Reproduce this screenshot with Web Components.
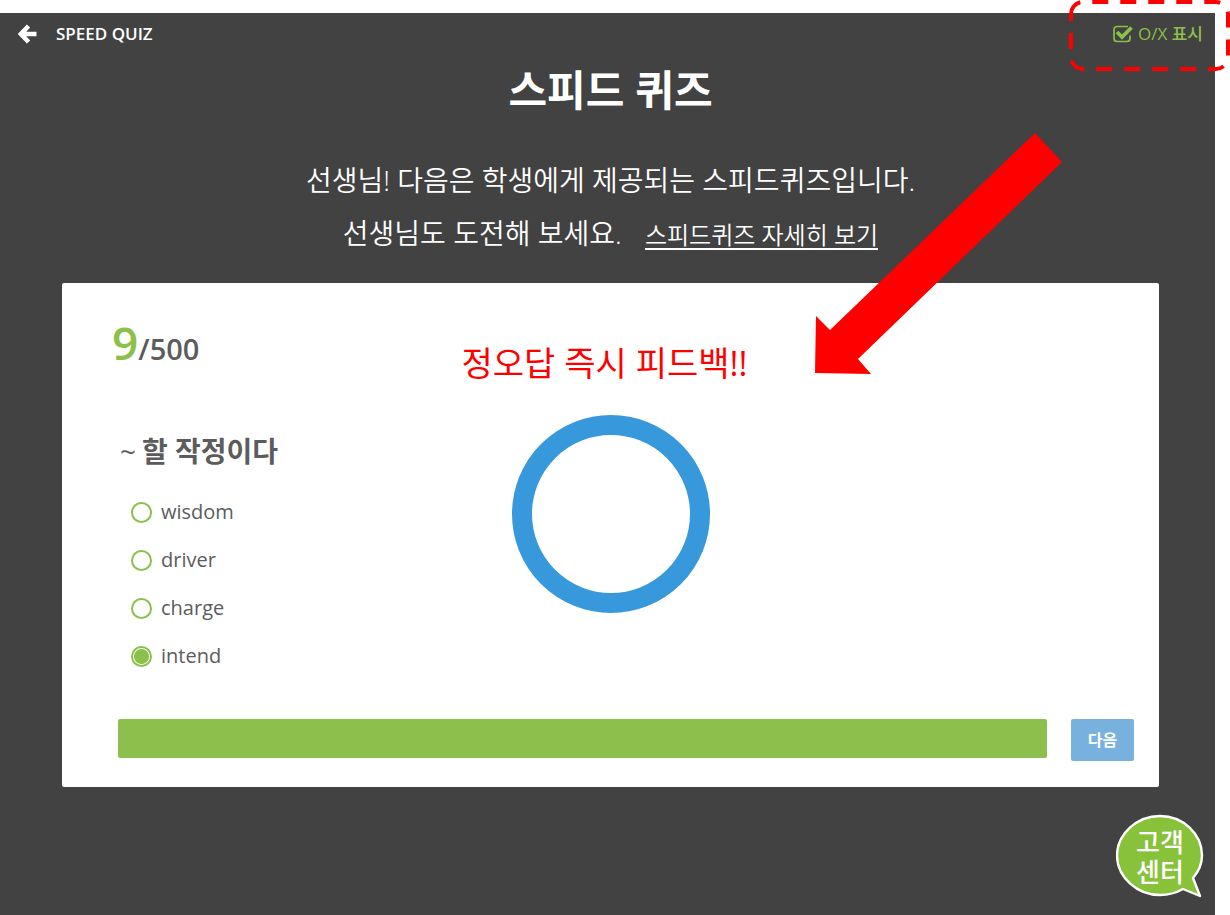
<!DOCTYPE html>
<html lang="ko">
<head>
<meta charset="utf-8">
<meta name="viewport" content="width=device-width, initial-scale=1">
<title>스피드 퀴즈</title>
<style>
  body { margin: 0; background: #fff; font-family: "Open Sans", "Noto Sans CJK KR", sans-serif; }
</style>
</head>
<body>
<quiz-page>
  <quiz-header slot="header" label="SPEED QUIZ"></quiz-header>
  <quiz-intro slot="intro"></quiz-intro>
  <quiz-card>
    <quiz-count slot="side" current="9" total="500"></quiz-count>
    <quiz-options slot="side" question="할 작정이다" choices="wisdom,driver,charge,intend" selected="intend"></quiz-options>
    <quiz-feedback slot="result">정오답 즉시 피드백!!</quiz-feedback>
    <quiz-footer slot="footer"></quiz-footer>
  </quiz-card>
  <help-bubble slot="overlay"></help-bubble>
  <callout-arrow slot="overlay"></callout-arrow>
  <callout-frame slot="overlay"></callout-frame>
</quiz-page>
<script>
const define = (name, render) => customElements.define(name, class extends HTMLElement {
  connectedCallback() {
    if (!this.shadowRoot) this.attachShadow({ mode: 'open' }).innerHTML =
      '<style>*{box-sizing:border-box}</style>' + render(this);
  }
});

define('quiz-page', () => `
<style>
  :host { position: relative; min-height: 100vh; padding: 13px 15px 0 0; box-sizing: border-box; display: flex; overflow: hidden; }
  main { flex: 1; background: #424242; color: #fff; padding-bottom: 120px; }
  .content { padding: 0 56px 0 62px; }
</style>
<main>
  <slot name="header"></slot>
  <div class="content"><slot name="intro"></slot><slot></slot></div>
</main>
<slot name="overlay"></slot>`);

define('quiz-header', el => `
<style>
  :host { display: block; font-size: 17px; font-weight: 600; line-height: 24px; }
  header { display: flex; justify-content: space-between; align-items: center; height: 42px; padding: 0 12px 0 18px; }
  a { display: flex; align-items: center; gap: 19px; color: #fff; text-decoration: none; }
  label { display: flex; align-items: center; gap: 5px; color: #8cbf4b; font-weight: 500; }
  .box { display: grid; }
  .box > * { grid-area: 1 / 1; }
  input { appearance: none; margin: 0; width: 20px; height: 18px; }
  svg { display: block; pointer-events: none; }
</style>
<header>
  <a href="#"><svg width="19" height="20" viewBox="0 0 19 20" fill="none" stroke="#fff" stroke-width="4.600"><path d="M10.500 2 3 10l7.500 8M3.500 10h15"/></svg>${el.getAttribute('label')}</a>
  <label><span class="box"><input type="checkbox" checked><svg width="20" height="18" viewBox="0 0 20 18" fill="none" stroke="#8cbf4b"><path stroke-width="1.700" d="M15 1.500H4A3 3 0 0 0 1 4.500v9a3 3 0 0 0 3 3h10a3 3 0 0 0 3-3v-3"/><path stroke-width="3.800" d="m4 7 5 5 9.500-9.500"/></svg></span>O/X 표시</label>
</header>`);

define('quiz-intro', () => `
<style>
  :host { display: block; text-align: center; }
  h1 { margin: 0 0 29px; font-size: 42px; line-height: 70px; font-weight: 700; }
  p { margin: 0 0 23px; font-size: 28px; line-height: 53px; font-weight: 350; }
  span { display: block; }
  a { color: #fff; font-size: 24px; margin-left: 16px; text-decoration: none; border-bottom: 2px solid #fff; display: inline-block; line-height: 26px; }
</style>
<h1>스피드 퀴즈</h1>
<p><span>선생님! 다음은 학생에게 제공되는 스피드퀴즈입니다.</span>
<span>선생님도 도전해 보세요. <a href="#">스피드퀴즈 자세히 보기</a></span></p>`);

define('quiz-card', () => `
<style>
  :host { display: block; background: #fff; color: #5c5c5c; border-radius: 2px; padding: 30px 25px 26px 50px; }
  .body { display: grid; grid-template-columns: 1fr auto 1fr; margin-right: 25px; }
</style>
<div class="body"><div><slot name="side"></slot></div><div><slot name="result"></slot></div></div>
<slot name="footer"></slot>`);

define('quiz-count', el => `
<style>
  :host { display: block; font-size: 29px; font-weight: 600; line-height: 64px; padding-top: 4px; margin-bottom: 46px; }
  b { font-size: 46px; line-height: 48px; font-weight: 600; color: #8cbf4b; }
</style>
<b>${el.getAttribute('current')}</b>/${el.getAttribute('total')}`);

define('quiz-options', el => `
<style>
  :host { display: block; }
  fieldset { border: 0; margin: 0; padding: 0 0 0 8px; min-width: 0; }
  legend { padding: 0; margin-bottom: 13px; font-size: 28px; line-height: 48px; font-weight: 700; }
  legend span { font-weight: 400; margin-right: 6px; }
  label { display: flex; align-items: center; gap: 9px; height: 48px; padding-left: 11px; font-size: 20px; line-height: 28px; }
  input { appearance: none; margin: 0; width: 21px; height: 21px; border: 2px solid #8cbf4b; border-radius: 50%; }
  input:checked { background: radial-gradient(circle, #8cbf4b 7px, #fff 8px); }
</style>
<fieldset><legend><span>~</span>${el.getAttribute('question')}</legend>
${el.getAttribute('choices').split(',').map(c => `<label><input type="radio" name="answer" value="${c}"${c === el.getAttribute('selected') ? ' checked' : ''}>${c}</label>`).join('')}
</fieldset>`);

define('quiz-feedback', () => `
<style>
  :host { display: block; text-align: center; color: #f00; font-size: 34px; font-weight: 400; line-height: 48px; padding-top: 26px; }
  div { padding-right: 12px; }
  svg { display: block; margin: 28px auto 0; }
</style>
<div><slot></slot></div>
<svg width="198" height="198" viewBox="0 0 198 198" role="img" aria-label="O"><circle cx="99" cy="99" r="89" fill="none" stroke="#3898dc" stroke-width="20"/></svg>`);

define('quiz-footer', () => `
<style>
  :host { display: flex; align-items: flex-start; gap: 24px; margin-top: 39px; padding-left: 6px; }
  progress { appearance: none; flex: 1; height: 39px; min-width: 0; border: 0; background: #eee; border-radius: 2px; overflow: hidden; }
  progress::-webkit-progress-bar { background: #eee; }
  progress::-webkit-progress-value { background: #8cbf4b; }
  button { width: 63px; height: 42px; border: 0; border-radius: 2px; padding: 0; background: #78b1de; color: #fff; font: 700 16px/24px "Open Sans", "Noto Sans CJK KR", sans-serif; }
</style>
<progress max="100" value="100" aria-label="시간"></progress><button type="button">다음</button>`);

define('help-bubble', () => `
<style>
  :host { position: absolute; right: 26px; bottom: 17px; }
  button { display: grid; width: 88px; height: 84px; border: 0; padding: 0; background: none; color: #fff; font: 500 26px/30px "Noto Sans CJK KR", sans-serif; }
  button > * { grid-area: 1 / 1; }
  span { padding-top: 12px; }
</style>
<button type="button"><svg width="88" height="84" viewBox="0 0 88 84"><path d="M77 64C83 57 86 50 86 41.500 86 20 67 2 44 2S1 20 1 41.500 21 81 44 81c8 0 16-2 23-6l17 7Z" fill="#88c13a" stroke="#fff" stroke-width="2.400" stroke-linejoin="round"/></svg><span>고객<br>센터</span></button>`);

define('callout-arrow', () => `
<style>:host { position: absolute; right: 168px; top: 133px; pointer-events: none; } svg { display: block; }</style>
<svg width="247" height="241" viewBox="0 0 247 241"><path fill="#f00" d="m220 0 27 29L43 226l13 15-56-1 1-57 14 14Z"/></svg>`);

define('callout-frame', () => `
<style>:host { position: absolute; right: 0; top: 0; pointer-events: none; } svg { display: block; }</style>
<svg width="161" height="72" viewBox="0 0 161 72"><path d="M2 14A12 12 0 0 1 14 2H147A12 12 0 0 1 159 14V57A12 12 0 0 1 147 69H14A12 12 0 0 1 2 57Z" fill="none" stroke="#f00" stroke-width="4" stroke-dasharray="16 12"/></svg>`);
</script>
</body>
</html>
